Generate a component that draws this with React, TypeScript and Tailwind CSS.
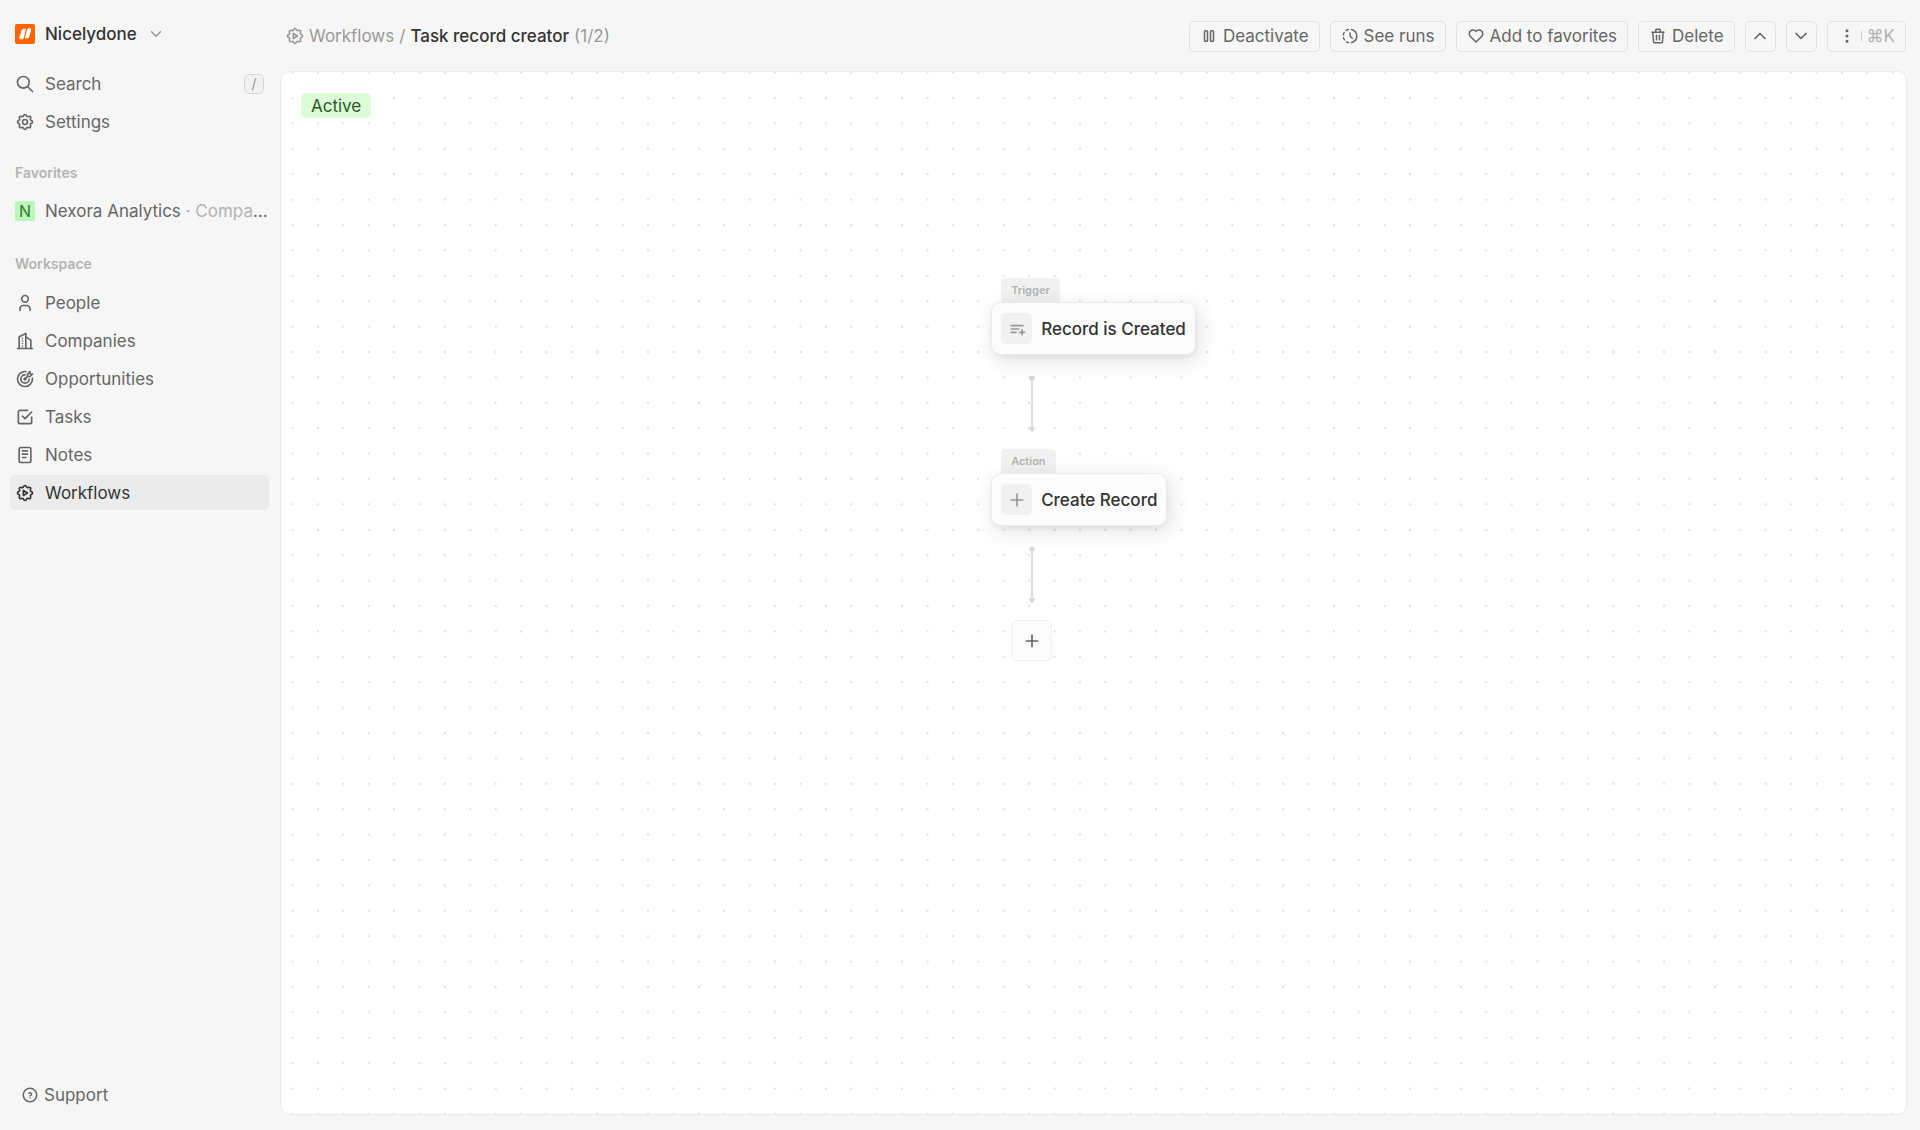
import type { ReactNode } from "react";
import {
  TbBuildingSkyscraper,
  TbCheckbox,
  TbChevronDown,
  TbChevronUp,
  TbDotsVertical,
  TbHeart,
  TbHelpCircle,
  TbHistoryToggle,
  TbNotes,
  TbPlayerPause,
  TbPlaylistAdd,
  TbPlus,
  TbSearch,
  TbSettings,
  TbSettingsAutomation,
  TbTargetArrow,
  TbTrash,
  TbUser,
} from "react-icons/tb";
import type { IconType } from "react-icons";

const workspaceItems: { label: string; icon: IconType; active?: boolean }[] = [
  { label: "People", icon: TbUser },
  { label: "Companies", icon: TbBuildingSkyscraper },
  { label: "Opportunities", icon: TbTargetArrow },
  { label: "Tasks", icon: TbCheckbox },
  { label: "Notes", icon: TbNotes },
  { label: "Workflows", icon: TbSettingsAutomation, active: true },
];

function NavItem({ label, icon: Icon, active, hint }: { label: string; icon: IconType; active?: boolean; hint?: string }) {
  return (
    <a
      href="#"
      aria-current={active ? "page" : undefined}
      className={
        active
          ? "flex h-[35px] items-center gap-2.5 rounded-[5px] bg-[#ebebeb] px-[5px] text-[#333333]"
          : "flex h-[35px] items-center gap-2.5 rounded-[5px] px-[5px] text-[#666666]"
      }
    >
      <Icon size={20} strokeWidth={2} className="shrink-0" />
      <span className="flex-1">{label}</span>
      {hint && (
        <kbd className="flex size-5 items-center justify-center rounded-[5px] border border-[#d6d6d6] bg-[#f1f1f1] font-[Inter,sans-serif] text-sm text-[#999999]">
          {hint}
        </kbd>
      )}
    </a>
  );
}

function SectionTitle({ children }: { children: ReactNode }) {
  return <h2 className="px-[5px] text-sm leading-5 font-semibold text-[#b3b3b3]">{children}</h2>;
}

function HeaderButton({ icon: Icon, children }: { icon: IconType; children: ReactNode }) {
  return (
    <button className="flex h-[31px] items-center gap-[5px] rounded-[5px] border border-[#e2e2e2] px-2.5">
      <Icon size={18} strokeWidth={2} />
      {children}
    </button>
  );
}

function IconButton({ icon: Icon, label }: { icon: IconType; label: string }) {
  return (
    <button aria-label={label} className="flex size-[31px] items-center justify-center rounded-[5px] border border-[#e2e2e2]">
      <Icon size={20} strokeWidth={2} />
    </button>
  );
}

function Sidebar() {
  return (
    <nav className="flex w-[280px] shrink-0 flex-col pt-4 pr-[11px] pb-[18px] pl-2.5">
      <button className="flex h-[35px] w-fit items-center gap-2.5 px-[5px] font-medium text-[#333333]">
        <svg viewBox="0 0 20 20" className="size-5" aria-hidden="true">
          <rect width="20" height="20" rx="2" fill="#ff6400" />
          <path d="M6.6 6.5C7 5.3 7.8 4.8 8.9 4.8h2L9 13.2c-.4 1.5-1 2.1-2.2 2.1H5.4c-1 0-1.4-.7-1.1-1.7zM11.9 6c.3-1.2 1-1.8 2.1-1.8h.9c1 0 1.5.7 1.2 1.7l-1.8 6.5c-.4 1.3-1.1 1.9-2.2 1.9H9.9z" fill="#fff" />
        </svg>
        Nicelydone
        <TbChevronDown size={18} strokeWidth={2} className="text-[#999999]" />
      </button>
      <div className="mt-[15px] flex flex-col gap-[3px]">
        <NavItem label="Search" icon={TbSearch} hint="/" />
        <NavItem label="Settings" icon={TbSettings} />
      </div>
      <section className="mt-6">
        <SectionTitle>Favorites</SectionTitle>
        <a href="#" className="mt-2.5 flex h-[35px] items-center gap-2.5 pl-[5px] text-[#666666]">
          <span className="flex size-5 shrink-0 items-center justify-center rounded-[2px] bg-[#bbf7bb] text-base text-[#2a7a2a]">N</span>
          <span className="truncate">
            Nexora Analytics <span className="text-[#b3b3b3]">· Companies</span>
          </span>
        </a>
      </section>
      <section className="mt-[26px]">
        <SectionTitle>Workspace</SectionTitle>
        <div className="mt-[11px] flex flex-col gap-[3px]">
          {workspaceItems.map((item) => (
            <NavItem key={item.label} {...item} />
          ))}
        </div>
      </section>
      <button className="mt-auto flex h-[35px] w-fit items-center gap-[5px] px-[11px] text-[#666666]">
        <TbHelpCircle size={18} strokeWidth={2} />
        Support
      </button>
    </nav>
  );
}

function Header() {
  return (
    <header className="flex h-[71px] items-center justify-between pt-px pr-px pl-[5px]">
      <div className="flex items-center gap-[5px] text-[#999999]">
        <a href="#" className="flex items-center gap-1">
          <TbSettingsAutomation size={20} strokeWidth={2} />
          Workflows
        </a>
        <span>/</span>
        <h1 className="font-medium text-[#333333]">Task record creator</h1>
        <span>(1/2)</span>
      </div>
      <div className="flex items-center gap-2.5 text-[#666666]">
        <HeaderButton icon={TbPlayerPause}>Deactivate</HeaderButton>
        <HeaderButton icon={TbHistoryToggle}>See runs</HeaderButton>
        <HeaderButton icon={TbHeart}>Add to favorites</HeaderButton>
        <HeaderButton icon={TbTrash}>Delete</HeaderButton>
        <IconButton icon={TbChevronUp} label="Previous record" />
        <IconButton icon={TbChevronDown} label="Next record" />
        <button aria-label="More actions" className="flex h-[31px] items-center gap-[5px] rounded-[5px] border border-[#e2e2e2] px-2.5">
          <TbDotsVertical size={18} strokeWidth={2} />
          <span className="h-2.5 w-px bg-[#cccccc]" />
          <span className="text-[#b3b3b3]">⌘K</span>
        </button>
      </div>
    </header>
  );
}

function StepNode({ kind, title, icon: Icon }: { kind: string; title: string; icon: IconType }) {
  return (
    <div className="flex w-fit flex-col items-start">
      <span className="ml-2.5 flex h-6 items-center rounded-t-[5px] bg-[#f1f1f1] px-2.5 text-[11px] font-semibold text-[#b3b3b3]">{kind}</span>
      <button className="flex h-[53px] items-center gap-[9px] rounded-[10px] border border-[#ebebeb] bg-[#fcfcfc] px-[9px] font-medium text-[#333333] shadow-[0_3px_5px_rgba(0,0,0,0.04),3px_5px_20px_rgba(0,0,0,0.12)]">
        <span className="flex size-[31px] items-center justify-center rounded-[5px] bg-[#f1f1f1] text-[#999999]">
          <Icon size={20} strokeWidth={2} />
        </span>
        {title}
      </button>
    </div>
  );
}

function Connector() {
  return (
    <svg viewBox="0 0 10 60" className="mt-[19px] ml-9 h-[60px] w-2.5" aria-hidden="true">
      <path d="M5 4v52" stroke="#d6d6d6" strokeWidth="1.6" />
      <circle cx="5" cy="4" r="2.6" fill="#d6d6d6" />
      <path d="M2.3 54h5.4L5 57.6z" fill="#d6d6d6" stroke="#d6d6d6" strokeLinejoin="round" />
    </svg>
  );
}

function Canvas() {
  return (
    <main className="relative flex-1 overflow-hidden rounded-[10px] border border-[#ebebeb] bg-white">
      <svg className="absolute inset-0 size-full" aria-hidden="true">
        <pattern id="grid" x="-1.2" y="-12.1" width="25.4" height="25.4" patternUnits="userSpaceOnUse">
          <circle cx="12.7" cy="12.7" r="1.25" fill="#e2e2e2" />
        </pattern>
        <rect width="100%" height="100%" fill="url(#grid)" />
      </svg>
      <span className="absolute top-[21px] left-5 flex h-[25px] items-center rounded-[5px] bg-[#ddfcd8] px-2.5 text-[#2a5822]">Active</span>
      <div className="relative mx-auto w-fit pt-[206px]">
        <StepNode kind="Trigger" title="Record is Created" icon={TbPlaylistAdd} />
        <Connector />
        <div className="mt-[15px]">
          <StepNode kind="Action" title="Create Record" icon={TbPlus} />
        </div>
        <Connector />
        <button aria-label="Add step" className="mt-[15px] ml-5 flex size-[41px] items-center justify-center rounded-[5px] border border-[#f1f1f1] bg-[#fcfcfc] text-[#666666]">
          <TbPlus size={20} strokeWidth={2} />
        </button>
      </div>
    </main>
  );
}

export default function App() {
  return (
    <div className="flex min-h-screen bg-[#f6f6f6] font-[Inter,sans-serif] text-[17px] leading-6 font-normal">
      <Sidebar />
      <div className="flex min-w-0 flex-1 flex-col pr-[13px] pb-[15px]">
        <Header />
        <Canvas />
      </div>
    </div>
  );
}
